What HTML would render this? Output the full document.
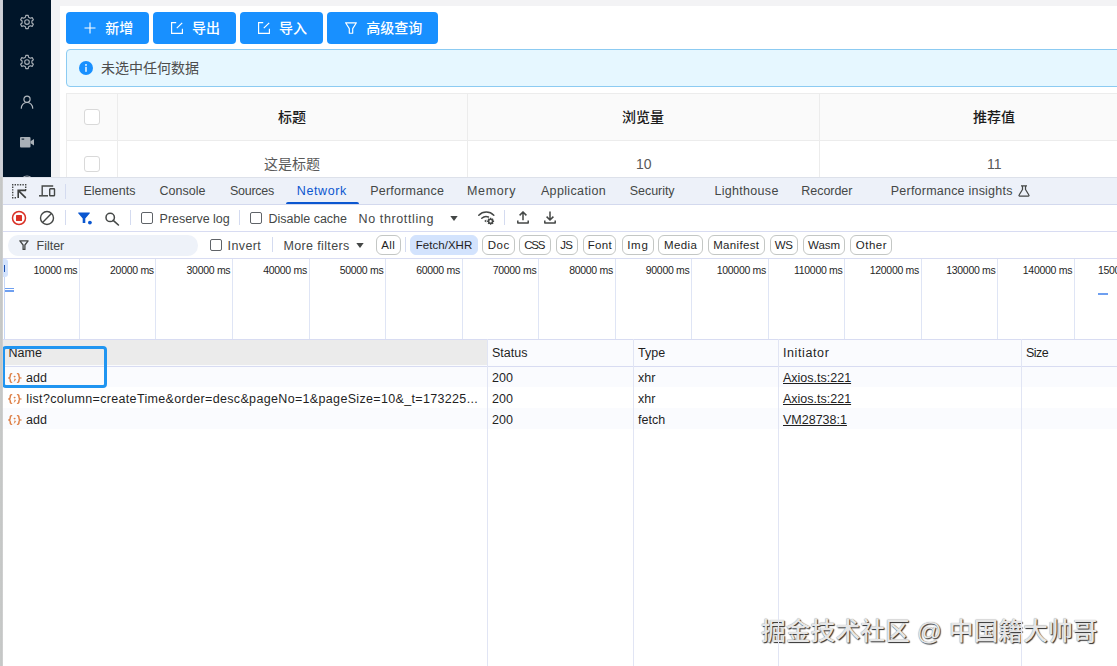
<!DOCTYPE html>
<html lang="zh-CN">
<head>
<meta charset="utf-8">
<title>Network panel</title>
<style>
*{box-sizing:border-box;margin:0;padding:0}
html,body{width:1117px;height:666px;overflow:hidden;background:#fff}
body{position:relative;font-family:"Liberation Sans","Noto Sans CJK SC",sans-serif;font-size:12px;color:#1f1f1f}
.abs{position:absolute}
.t{position:absolute;white-space:nowrap;line-height:1}
/* ---------- app (top) ---------- */
#app{position:absolute;left:0;top:0;width:1117px;height:178px;background:#f3f3f5;overflow:hidden}
#side{position:absolute;left:3px;top:0;width:48px;height:178px;background:#001529}
#card{position:absolute;left:60px;top:6px;width:1057px;height:172px;background:#fff}
.btn{position:absolute;top:12.2px;height:31.5px;background:#1890ff;border-radius:4px;color:#fff;font-size:14px}
.btn .t{top:8px;font-size:14px;line-height:16px;color:#fff;font-weight:500}
#alert{position:absolute;left:66px;top:49px;width:1060px;height:38px;background:#e6f7ff;border:1px solid #8ccbf2;border-radius:4px}
#tbl{position:absolute;left:66px;top:93px;width:1060px;height:90px;border-top:1px solid #ececec;border-left:1px solid #ececec}
#thead{position:absolute;left:0;top:0;width:1060px;height:47px;background:#fafafa;border-bottom:1px solid #ececec}
.vl{position:absolute;top:0;width:1px;height:90px;background:#ececec}
.cb{position:absolute;width:16px;height:16px;border:1px solid #d9d9d9;border-radius:3px;background:#fff}
.th{font-size:14px;color:#1c1c1c;font-weight:500}
.td{font-size:14px;color:#595959}
/* ---------- devtools ---------- */
#dt{position:absolute;left:3px;top:178px;width:1114px;height:488px;background:#fff}
#tabs{position:absolute;left:0;top:0;width:1114px;height:26.8px;z-index:1;background:#edf1f9;border-bottom:1px solid #d3d9ee}
#tabs .t{top:7px;font-size:12.5px;color:#444746}
#bar1{position:absolute;left:0;top:26px;width:1114px;height:28px;background:#fff;border-bottom:1px solid #d8dcf2}
#bar2{position:absolute;left:0;top:54px;width:1114px;height:27px;z-index:1;background:#fff;border-bottom:1px solid #d8dcf2}
#bar1 .t,#bar2 .t{font-size:12.5px;color:#444746}
.chk{position:absolute;width:12px;height:12px;border:1px solid #5f6368;border-radius:2px;background:#fff}
.sep{position:absolute;width:1px;height:16px;background:#d4dbf0}
.chip{position:absolute;top:3px;height:20px;border:1px solid #c4c7c5;border-radius:6px;font-size:11.5px;color:#1f1f1f;text-align:center;line-height:18px;background:#fff}
#tl{position:absolute;left:0;top:80px;width:1114px;height:82px;background:#fff}
.gl{position:absolute;top:0;width:1px;height:82px;background:#dfe5f5}
#tl .t{top:6.6px;margin-left:-.1px;font-size:10.5px;letter-spacing:-.3px;color:#1f1f1f;text-align:right;width:70px}
#nh{position:absolute;left:0;top:161px;width:1114px;height:27.6px;z-index:1;background:#fafbfe;border-top:1px solid #d8dcf2;border-bottom:1px solid #d8dcf2}
#nh .t{top:7px;font-size:12.5px;color:#1f1f1f}
.row{position:absolute;left:0;width:1114px;height:21px}
.row .t{top:5.5px;font-size:12.5px;color:#1f1f1f}
.cl{position:absolute;z-index:2;top:161px;width:1px;height:327px;background:#e1e5f4}
.ic{position:absolute;left:5.4px;top:6.6px;width:13.2px;height:10px}
u{text-underline-offset:1px}
</style>
</head>
<body>
<div id="app">
  <div id="side">
    <svg class="abs" style="left:16px;top:14px" width="16" height="16" viewBox="0 0 16 16"><path d="M6.45 3.24 L6.80 1.31 L9.20 1.31 L9.55 3.24 L11.35 4.28 L13.19 3.61 L14.40 5.70 L12.89 6.96 L12.89 9.04 L14.40 10.30 L13.19 12.39 L11.35 11.72 L9.55 12.76 L9.20 14.69 L6.80 14.69 L6.45 12.76 L4.65 11.72 L2.81 12.39 L1.60 10.30 L3.11 9.04 L3.11 6.96 L1.60 5.70 L2.81 3.61 L4.65 4.28Z" fill="none" stroke="#a6adb4" stroke-width="1.15" stroke-linejoin="round"/><circle cx="8" cy="8" r="2.3" fill="none" stroke="#a6adb4" stroke-width="1.15"/></svg>
    <svg class="abs" style="left:16px;top:54px" width="16" height="16" viewBox="0 0 16 16"><path d="M6.45 3.24 L6.80 1.31 L9.20 1.31 L9.55 3.24 L11.35 4.28 L13.19 3.61 L14.40 5.70 L12.89 6.96 L12.89 9.04 L14.40 10.30 L13.19 12.39 L11.35 11.72 L9.55 12.76 L9.20 14.69 L6.80 14.69 L6.45 12.76 L4.65 11.72 L2.81 12.39 L1.60 10.30 L3.11 9.04 L3.11 6.96 L1.60 5.70 L2.81 3.61 L4.65 4.28Z" fill="none" stroke="#a6adb4" stroke-width="1.15" stroke-linejoin="round"/><circle cx="8" cy="8" r="2.3" fill="none" stroke="#a6adb4" stroke-width="1.15"/></svg>
    <svg class="abs" style="left:16px;top:94px" width="16" height="16" viewBox="0 0 16 16"><circle cx="8" cy="5.2" r="3.1" fill="none" stroke="#b4bac0" stroke-width="1.2"/><path d="M2.3 14.2a5.7 5.7 0 0 1 11.4 0" fill="none" stroke="#b4bac0" stroke-width="1.2" stroke-linecap="round"/></svg>
    <svg class="abs" style="left:16px;top:134px" width="16" height="16" viewBox="0 0 16 16"><rect x="1" y="3" width="10.5" height="10.5" rx="1" fill="#a9b0b7"/><path d="M11.5 7.2L15 5v6.5l-3.5-2.2z" fill="#a9b0b7"/><rect x="2.6" y="4.6" width="2.6" height="1" fill="#001529"/></svg>
    <svg class="abs" style="left:16px;top:174px" width="16" height="16" viewBox="0 0 16 16"><circle cx="8" cy="8" r="6" fill="none" stroke="#a6adb4" stroke-width="1.2"/></svg>
  </div>
  <div id="card"></div>
  <div class="btn" style="left:66.2px;width:82.4px"><svg class="abs" style="left:18px;top:10px" width="12" height="12" viewBox="0 0 12 12"><path d="M6 .5v11M.5 6h11" stroke="#fff" stroke-width="1.1" fill="none"/></svg><span class="t" style="left:39px">新增</span></div>
  <div class="btn" style="left:153.1px;width:82.6px"><svg class="abs" style="left:17px;top:9px" width="14" height="14" viewBox="0 0 14 14"><path d="M6.2 1.6H1.6v10.8h10.8V7.8" fill="none" stroke="#fff" stroke-width="1.15"/><path d="M6.8 7.2L12.2 1.8" fill="none" stroke="#fff" stroke-width="1.2"/></svg><span class="t" style="left:39px">导出</span></div>
  <div class="btn" style="left:240.1px;width:82.8px"><svg class="abs" style="left:17px;top:9px" width="14" height="14" viewBox="0 0 14 14"><path d="M6.2 1.6H1.6v10.8h10.8V7.8" fill="none" stroke="#fff" stroke-width="1.15"/><path d="M6.8 7.2L12.2 1.8" fill="none" stroke="#fff" stroke-width="1.2"/></svg><span class="t" style="left:39px">导入</span></div>
  <div class="btn" style="left:327.2px;width:110.9px"><svg class="abs" style="left:17px;top:9px" width="14" height="14" viewBox="0 0 14 14"><path d="M1.6 1.8h10.8L8.7 7.6v4.6H5.3V7.6z" fill="none" stroke="#fff" stroke-width="1.15" stroke-linejoin="round"/></svg><span class="t" style="left:39px">高级查询</span></div>
  <div id="alert"><svg class="abs" style="left:12px;top:11px" width="14" height="14" viewBox="0 0 14 14"><circle cx="7" cy="7" r="7" fill="#1890ff"/><rect x="6.3" y="5.8" width="1.4" height="5" fill="#fff"/><circle cx="7" cy="3.9" r=".95" fill="#fff"/></svg><span class="t" style="left:34px;top:10px;font-size:14px;line-height:16px;color:#4d4d4d">未选中任何数据</span></div>
  <div id="tbl">
    <div id="thead"></div>
    <div class="vl" style="left:49.5px"></div>
    <div class="vl" style="left:400px"></div>
    <div class="vl" style="left:752px"></div>
    <div class="cb" style="left:17px;top:15px"></div>
    <div class="cb" style="left:17px;top:62px"></div>
    <span class="t th" style="left:211px;top:16px">标题</span>
    <span class="t th" style="left:555px;top:16px">浏览量</span>
    <span class="t th" style="left:906px;top:16px">推荐值</span>
    <span class="t td" style="left:197px;top:63px">这是标题</span>
    <span class="t td" style="left:569px;top:63px">10</span>
    <span class="t td" style="left:920px;top:63px">11</span>
  </div>
</div>
<div class="abs" style="left:0;top:0;width:3px;height:177px;background:linear-gradient(90deg,#cdd0d7 0,#ced1d8 70%,#c2c5cc 100%)"></div>
<div class="abs" style="left:0;top:177px;width:3px;height:489px;z-index:5;background:linear-gradient(90deg,#c8cac9 0,#c4c6c5 66%,#bdbebe 72%,#e9e9e9 100%)"></div>
<div class="abs" style="left:3px;top:177px;width:1114px;height:1px;background:#dde1ea"></div>
<div id="dt">
  <div id="tabs">
    <svg class="abs" style="left:9px;top:6px" width="15" height="15" viewBox="0 0 15 15"><path d="M0 0h1.4v1.4h-1.4zM2.6 0h1.4v1.4h-1.4zM5.2 0h1.4v1.4h-1.4zM7.8 0h1.4v1.4h-1.4zM10.4 0h1.4v1.4h-1.4zM13 0h1.4v1.4h-1.4zM0 2.6h1.4v1.4h-1.4zM0 5.2h1.4v1.4h-1.4zM0 7.8h1.4v1.4h-1.4zM0 10.4h1.4v1.4h-1.4zM0 13h1.4v1.4h-1.4zM13 2.6h1.4v1.4h-1.4zM13 5h1.4v1.4h-1.4zM2.6 13h1.4v1.4h-1.4z" fill="#444746"/><path d="M6.2 14V6.4h7.8M6.4 6.6l7.4 7.3" fill="none" stroke="#3c3f3e" stroke-width="1.6"/></svg>
    <svg class="abs" style="left:36px;top:6px" width="17" height="14" viewBox="0 0 17 14"><path d="M3.2 11V2h11" fill="none" stroke="#444746" stroke-width="1.4"/><path d="M0 11.8h9" stroke="#444746" stroke-width="1.5"/><rect x="10.7" y="4.7" width="4.8" height="7.1" rx=".6" fill="none" stroke="#444746" stroke-width="1.4"/></svg>
    <div class="sep" style="left:62px;top:6px;height:15px"></div>
    <svg class="abs" style="left:1015.3px;top:7px" width="12" height="12" viewBox="0 0 12 12"><path d="M3 .8h6M4.5 .8v3.7L1.1 10a.7.7 0 0 0 .6 1.100h8.600a.7.7 0 0 0 .6-1.100L7.500 4.500V.8" fill="none" stroke="#444746" stroke-width="1.25" stroke-linejoin="round"/></svg>

    <span class="t" style="left:80.4px">Elements</span>
    <span class="t" style="left:156.5px">Console</span>
    <span class="t" style="left:227px;letter-spacing:-.28px">Sources</span>
    <span class="t" style="left:293.8px;color:#0b57d0;letter-spacing:.62px">Network</span>
    <span class="t" style="left:367.2px;letter-spacing:.22px">Performance</span>
    <span class="t" style="left:464px;letter-spacing:.65px">Memory</span>
    <span class="t" style="left:537.9px;letter-spacing:.36px">Application</span>
    <span class="t" style="left:626.8px;letter-spacing:-.05px">Security</span>
    <span class="t" style="left:711.5px;letter-spacing:.3px">Lighthouse</span>
    <span class="t" style="left:798.3px;letter-spacing:-.05px">Recorder</span>
    <span class="t" style="left:887.8px;letter-spacing:.22px">Performance insights</span>
    <div class="abs" style="left:283.3px;top:24.2px;width:72.4px;height:2.3px;border-radius:2px 2px 0 0;background:#0b57d0"></div>
  </div>
  <div id="bar1">
    <svg class="abs" style="left:8px;top:6px" width="16" height="16" viewBox="0 0 16 16"><circle cx="8" cy="8" r="6.5" fill="none" stroke="#d93025" stroke-width="1.5"/><rect x="5" y="5" width="6" height="6" rx=".6" fill="#d93025"/></svg>
    <svg class="abs" style="left:36px;top:6px" width="16" height="16" viewBox="0 0 16 16"><circle cx="8" cy="8" r="6.5" fill="none" stroke="#444746" stroke-width="1.4"/><path d="M3.6 12.4L12.4 3.6" stroke="#444746" stroke-width="1.4"/></svg>
    <div class="sep" style="left:62px;top:6px;height:15px"></div>
    <svg class="abs" style="left:75px;top:8px" width="14" height="13" viewBox="0 0 14 13"><path d="M.6.4h10.8a.5.5 0 0 1 .4.8L7.3 6.6V11H4.7V6.6L.2 1.2A.5.5 0 0 1 .6.4z" fill="#0b57d0"/><circle cx="11.9" cy="10.6" r="1.9" fill="#0b57d0"/></svg>
    <svg class="abs" style="left:102px;top:8px" width="15" height="14" viewBox="0 0 15 14"><circle cx="5.2" cy="5.4" r="4.2" fill="none" stroke="#444746" stroke-width="1.5"/><path d="M8.2 8.4l5.2 4.6" stroke="#444746" stroke-width="1.6" stroke-linecap="round"/></svg>
    <div class="sep" style="left:127px;top:6px;height:15px"></div>
    <div class="sep" style="left:236px;top:6px;height:15px"></div>
    <svg class="abs" style="left:447px;top:12px" width="8" height="5" viewBox="0 0 8 5"><path d="M.3 0h7.4L4 5z" fill="#444746"/></svg>
    <svg class="abs" style="left:475px;top:6px" width="17" height="15" viewBox="0 0 17 15"><path d="M.8 5.2a10.4 10.4 0 0 1 15 0" fill="none" stroke="#444746" stroke-width="1.5" stroke-linecap="round"/><path d="M3.8 8.3a6.4 6.4 0 0 1 6.6-1.3" fill="none" stroke="#444746" stroke-width="1.5" stroke-linecap="round"/><path d="M6.2 11l2.1-1.6v3z" fill="#444746"/><circle cx="12.6" cy="11.3" r="2" fill="none" stroke="#444746" stroke-width="1.6"/><path d="M12.6 7.8v1.3M12.6 13.5v1.3M9.1 11.3h1.3M14.8 11.3h1.3M10.1 8.8l.9.9M14.2 12.9l.9.9M10.1 13.8l.9-.9M14.2 9.7l.9-.9" stroke="#444746" stroke-width="1.4"/></svg>
    <div class="sep" style="left:501px;top:6px;height:15px"></div>
    <svg class="abs" style="left:514px;top:7px" width="12" height="13" viewBox="0 0 12 13"><path d="M6 9.2V1.2M2.6 4.4L6 1l3.4 3.4" fill="none" stroke="#444746" stroke-width="1.5"/><path d="M.8 9.6v2.400h10.400V9.600" fill="none" stroke="#444746" stroke-width="1.500" stroke-linejoin="round"/></svg>
    <svg class="abs" style="left:541px;top:7px" width="12" height="13" viewBox="0 0 12 13"><path d="M6 .6v8M2.6 5.6L6 9l3.4-3.4" fill="none" stroke="#444746" stroke-width="1.5"/><path d="M.8 9.6v2.400h10.400V9.600" fill="none" stroke="#444746" stroke-width="1.500" stroke-linejoin="round"/></svg>

    <div class="chk" style="left:138px;top:7.7px"></div>
    <span class="t" style="left:156.6px;top:8.5px">Preserve log</span>
    <div class="chk" style="left:246.8px;top:7.7px"></div>
    <span class="t" style="left:265.5px;top:8.5px">Disable cache</span>
    <span class="t" style="left:355.5px;top:8.5px;letter-spacing:.62px">No throttling</span>
  </div>
  <div id="bar2">
    <div class="abs" style="left:5px;top:3.4px;width:190px;height:20.4px;border-radius:10.2px;background:#eef2f9"></div>
    <svg class="abs" style="left:16px;top:8px" width="10" height="10" viewBox="0 0 10 10"><path d="M.9.8h8.2L5.9 5v4.4H4.1V5z" fill="none" stroke="#444746" stroke-width="1.3" stroke-linejoin="round"/></svg>
    <div class="sep" style="left:269px;top:5px;height:15px"></div>
    <svg class="abs" style="left:353px;top:11px" width="8" height="5" viewBox="0 0 8 5"><path d="M.3 0h7.4L4 5z" fill="#444746"/></svg>
    <div class="sep" style="left:402px;top:5px;height:15px"></div>

    <span class="t" style="left:33.5px;top:7.5px">Filter</span>
    <div class="chk" style="left:207.4px;top:7.4px"></div>
    <span class="t" style="left:224.6px;top:7.5px;letter-spacing:.38px">Invert</span>
    <span class="t" style="left:280.5px;top:7.5px;letter-spacing:.36px">More filters</span>
    <div class="chip" style="left:372.5px;width:25px;letter-spacing:0.33px;text-indent:0.33px">All</div>
    <div class="chip" style="left:407.3px;width:67.4px;background:#d3e3fd;border-color:#d3e3fd;letter-spacing:0.04px;text-indent:0.04px">Fetch/XHR</div>
    <div class="chip" style="left:479.2px;width:32.6px;letter-spacing:0.6px;text-indent:0.6px">Doc</div>
    <div class="chip" style="left:516.2px;width:31.4px;letter-spacing:-1.2px;text-indent:-1.2px">CSS</div>
    <div class="chip" style="left:552.5px;width:22px;letter-spacing:-0.7px;text-indent:-0.7px">JS</div>
    <div class="chip" style="left:579.9px;width:33.5px;letter-spacing:0.3px;text-indent:0.3px">Font</div>
    <div class="chip" style="left:618.5px;width:32px;letter-spacing:0.73px;text-indent:0.73px">Img</div>
    <div class="chip" style="left:655.4px;width:44.2px;letter-spacing:0.4px;text-indent:0.4px">Media</div>
    <div class="chip" style="left:704.6px;width:57px;letter-spacing:0.33px;text-indent:0.33px">Manifest</div>
    <div class="chip" style="left:767px;width:27.6px;letter-spacing:-0.3px;text-indent:-0.3px">WS</div>
    <div class="chip" style="left:799.9px;width:42.3px;letter-spacing:0px;text-indent:0px">Wasm</div>
    <div class="chip" style="left:847.2px;width:42px;letter-spacing:0.52px;text-indent:0.52px">Other</div>
  </div>
  <div id="tl">
    <div class="abs" style="left:0;top:1px;width:5px;height:18px;background:#d3e3fd;border-radius:0 3px 3px 0"></div>
    <div class="abs" style="left:.9px;top:7px;width:1.3px;height:7px;background:#1a4fb0"></div>
    <div class="abs" style="left:.5px;top:19px;width:1px;height:63px;background:#c5d6f7"></div>
    <div class="abs" style="left:2px;top:29.5px;width:8.5px;height:1.4px;background:#6e9ff0"></div>
    <div class="abs" style="left:2px;top:32.2px;width:8.5px;height:1.4px;background:#6e9ff0"></div>
    <div class="abs" style="left:1095px;top:35px;width:10px;height:2px;background:#6e9ff0"></div>
    <div class="gl" style="left:75.9px"></div><span class="t" style="left:4.4px">10000 ms</span>
    <div class="gl" style="left:152.4px"></div><span class="t" style="left:80.9px">20000 ms</span>
    <div class="gl" style="left:228.9px"></div><span class="t" style="left:157.4px">30000 ms</span>
    <div class="gl" style="left:305.5px"></div><span class="t" style="left:234.0px">40000 ms</span>
    <div class="gl" style="left:382.0px"></div><span class="t" style="left:310.5px">50000 ms</span>
    <div class="gl" style="left:458.5px"></div><span class="t" style="left:387.0px">60000 ms</span>
    <div class="gl" style="left:535.0px"></div><span class="t" style="left:463.5px">70000 ms</span>
    <div class="gl" style="left:611.5px"></div><span class="t" style="left:540.0px">80000 ms</span>
    <div class="gl" style="left:688.1px"></div><span class="t" style="left:616.6px">90000 ms</span>
    <div class="gl" style="left:764.6px"></div><span class="t" style="left:693.1px">100000 ms</span>
    <div class="gl" style="left:841.1px"></div><span class="t" style="left:769.6px">110000 ms</span>
    <div class="gl" style="left:917.6px"></div><span class="t" style="left:846.1px">120000 ms</span>
    <div class="gl" style="left:994.1px"></div><span class="t" style="left:922.6px">130000 ms</span>
    <div class="gl" style="left:1070.7px"></div><span class="t" style="left:999.2px">140000 ms</span>
    <span class="t" style="left:1095px;text-align:left">150000 ms</span>
  </div>
  <div id="nh">
    <div class="abs" style="left:0;top:0;width:484px;height:25px;background:#ebebeb"></div>
    <span class="t" style="left:5.5px">Name</span>
    <span class="t" style="left:489px">Status</span>
    <span class="t" style="left:635px">Type</span>
    <span class="t" style="left:780px;letter-spacing:.6px">Initiator</span>
    <span class="t" style="left:1023px;letter-spacing:-.5px">Size</span>
  </div>
  <div class="row" style="top:188px;background:#fafbfe">
    <svg class="ic" viewBox="0 0 13 12" preserveAspectRatio="none"><path d="M3.6.8C2.2.8 2.3 1.9 2.3 3.1S2.2 5.6.8 6c1.4.4 1.5 1.7 1.5 2.9s-.1 2.3 1.3 2.3M9.4.8c1.400 0 1.300 1.100 1.300 2.300S10.800 5.600 12.200 6c-1.400.4-1.500 1.700-1.500 2.900s.1 2.300-1.300 2.300" fill="none" stroke="#de7f45" stroke-width="1.5" stroke-linecap="round"/><circle cx="6.5" cy="4.300" r="1" fill="#de7f45"/><path d="M6.500 6.900a1 1 0 1 1 0 2c0 .6-.3 1-.8 1.300" fill="#de7f45" stroke="#de7f45" stroke-width=".6"/></svg><span class="t" style="left:23px">add</span><span class="t" style="left:489px">200</span><span class="t" style="left:635px">xhr</span><span class="t" style="left:780px"><u>Axios.ts:221</u></span>
  </div>
  <div class="row" style="top:209px">
    <svg class="ic" viewBox="0 0 13 12" preserveAspectRatio="none"><path d="M3.6.8C2.2.8 2.3 1.9 2.3 3.1S2.2 5.6.8 6c1.4.4 1.5 1.7 1.5 2.9s-.1 2.3 1.3 2.3M9.4.8c1.400 0 1.300 1.100 1.300 2.300S10.800 5.600 12.200 6c-1.400.4-1.500 1.700-1.500 2.900s.1 2.300-1.300 2.300" fill="none" stroke="#de7f45" stroke-width="1.5" stroke-linecap="round"/><circle cx="6.5" cy="4.300" r="1" fill="#de7f45"/><path d="M6.500 6.900a1 1 0 1 1 0 2c0 .6-.3 1-.8 1.300" fill="#de7f45" stroke="#de7f45" stroke-width=".6"/></svg><span class="t" id="long" style="left:23.3px;letter-spacing:.335px">list?column=createTime&amp;order=desc&amp;pageNo=1&amp;pageSize=10&amp;_t=173225...</span><span class="t" style="left:489px">200</span><span class="t" style="left:635px">xhr</span><span class="t" style="left:780px"><u>Axios.ts:221</u></span>
  </div>
  <div class="row" style="top:230px;background:#fafbfe">
    <svg class="ic" viewBox="0 0 13 12" preserveAspectRatio="none"><path d="M3.6.8C2.2.8 2.3 1.9 2.3 3.1S2.2 5.6.8 6c1.4.4 1.5 1.7 1.5 2.9s-.1 2.3 1.3 2.3M9.4.8c1.400 0 1.300 1.100 1.300 2.300S10.800 5.600 12.200 6c-1.400.4-1.500 1.700-1.500 2.900s.1 2.300-1.300 2.300" fill="none" stroke="#de7f45" stroke-width="1.5" stroke-linecap="round"/><circle cx="6.5" cy="4.300" r="1" fill="#de7f45"/><path d="M6.500 6.900a1 1 0 1 1 0 2c0 .6-.3 1-.8 1.300" fill="#de7f45" stroke="#de7f45" stroke-width=".6"/></svg><span class="t" style="left:23px">add</span><span class="t" style="left:489px">200</span><span class="t" style="left:635px">fetch</span><span class="t" style="left:780px"><u>VM28738:1</u></span>
  </div>
  <div class="cl" style="left:484px"></div>
  <div class="cl" style="left:630px"></div>
  <div class="cl" style="left:775px"></div>
  <div class="cl" style="left:1018px"></div>
  <div class="abs" style="left:-1.1px;top:167.5px;width:105.5px;height:42.3px;border:3px solid #2095f1;border-radius:4px;z-index:3"></div>
</div>
<div class="t" style="left:761px;top:619px;font-size:24.8px;line-height:26px;font-weight:500;color:#e6e6e6;text-shadow:1px 1px 1px #2e2e2e,0 0 1px #8a8a8a">掘金技术社区 @ 中国籍大帅哥</div>
</body>
</html>
